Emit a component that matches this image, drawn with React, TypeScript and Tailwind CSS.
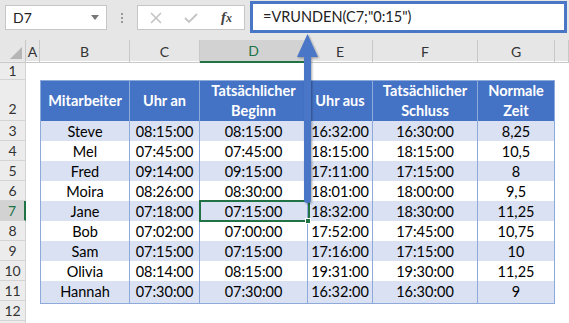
import React from "react";

const font = { fontFamily: "Lato, 'Open Sans', sans-serif" };

const rows = [
  ["Steve", "08:15:00", "08:15:00", "16:32:00", "16:30:00", "8,25"],
  ["Mel", "07:45:00", "07:45:00", "18:15:00", "18:15:00", "10,5"],
  ["Fred", "09:14:00", "09:15:00", "17:11:00", "17:15:00", "8"],
  ["Moira", "08:26:00", "08:30:00", "18:01:00", "18:00:00", "9,5"],
  ["Jane", "07:18:00", "07:15:00", "18:32:00", "18:30:00", "11,25"],
  ["Bob", "07:02:00", "07:00:00", "17:52:00", "17:45:00", "10,75"],
  ["Sam", "07:15:00", "07:15:00", "17:16:00", "17:15:00", "10"],
  ["Olivia", "08:14:00", "08:15:00", "19:31:00", "19:30:00", "11,25"],
  ["Hannah", "07:30:00", "07:30:00", "16:32:00", "16:30:00", "9"],
];

const grid = "grid grid-cols-[26px_14px_90px_70px_108px_65px_105px_77px_1fr]";

function RowHead({ n, h, sel, bottom }: { n: number | string; h: string; sel?: boolean; bottom?: boolean }) {
  return (
    <div
      className={`${h} flex ${bottom ? "items-end pb-[1px]" : "items-center"} justify-center border-b border-r border-[#d4d4d4] text-[14px] ${
        sel ? "bg-[#d2d2d2] text-[#217346] border-r-2 border-r-[#217346]" : "bg-[#ececec] text-[#333]"
      }`}
    >
      {n}
    </div>
  );
}

export default function App() {
  return (
    <div className="w-[569px] h-[323px] overflow-hidden bg-white relative text-black" style={font}>
      {/* Formula toolbar */}
      <div className="h-[40px] bg-[#e6e6e6] flex items-start pt-[5px] pl-[5px] relative">
        <div className="w-[102px] h-[25px] bg-white border border-[#c6c6c6] flex items-center justify-between pl-[7px] pr-[7px] text-[14px] text-[#222]">
          <span>D7</span>
          <span className="w-0 h-0 border-l-[4px] border-r-[4px] border-t-[5px] border-l-transparent border-r-transparent border-t-[#777]"></span>
        </div>
        <div className="w-[30px] h-[25px] flex flex-col items-center justify-center gap-[2px]">
          <span className="w-[2px] h-[2px] bg-[#999]"></span>
          <span className="w-[2px] h-[2px] bg-[#999]"></span>
          <span className="w-[2px] h-[2px] bg-[#999]"></span>
        </div>
        <div className="w-[108px] h-[25px] bg-white border border-[#c6c6c6] flex items-center pl-[12px] gap-[22px]">
          <svg width="12" height="12" viewBox="0 0 12 12">
            <path d="M1 1L11 11M11 1L1 11" stroke="#c4c4c4" strokeWidth="1.6" fill="none" />
          </svg>
          <svg width="14" height="12" viewBox="0 0 14 12">
            <path d="M1 6L5 10L13 2" stroke="#c4c4c4" strokeWidth="1.8" fill="none" />
          </svg>
          <span className="ml-[1px] text-[15px] italic font-bold text-[#444] leading-none" style={{ fontFamily: "'Liberation Serif', serif" }}>
            f<span className="text-[12px]">x</span>
          </span>
        </div>
        <div className="absolute left-[250px] top-[1px] w-[317px] h-[32px] border-[3px] border-[#4a76c6] bg-white flex items-center pl-[10px] text-[14.5px] text-[#222]">
          =VRUNDEN(C7;"0:15")
        </div>
      </div>

      {/* Column headers */}
      <div className={`${grid} h-[21px] bg-[#e6e6e6] text-[14px] text-[#333]`}>
        <div className="border-r border-b border-[#c8c8c8] relative">
          <svg className="absolute right-[3px] bottom-[3px]" width="12" height="12" viewBox="0 0 12 12">
            <path d="M12 0L12 12L0 12Z" fill="#b5b5b5" />
          </svg>
        </div>
        {["A", "B", "C"].map((c) => (
          <div key={c} className="flex items-center justify-center border-r border-b border-[#c8c8c8]">{c}</div>
        ))}
        <div className="flex items-center justify-center border-r border-[#c8c8c8] bg-[#d2d2d2] text-[#217346] border-b-2 border-b-[#217346]">D</div>
        {["E", "F", "G", ""].map((c, i) => (
          <div key={i} className="flex items-center justify-center border-r border-b border-[#c8c8c8]">{c}</div>
        ))}
      </div>

      {/* Row 1 */}
      <div className={`${grid} h-[19px]`}>
        <RowHead n={1} h="h-[19px]" />
      </div>

      {/* Row 2 header */}
      <div className={`${grid} h-[41px]`}>
        <RowHead n={2} h="h-[41px]" bottom />
        <div></div>
        {[
          ["Mitarbeiter"],
          ["Uhr an"],
          ["Tatsächlicher", "Beginn"],
          ["Uhr aus"],
          ["Tatsächlicher", "Schluss"],
          ["Normale", "Zeit"],
        ].map((lines, i) => (
          <div
            key={i}
            className={`bg-[#4472c4] text-white font-bold text-[14.5px] leading-[20px] flex flex-col items-center justify-center border-t border-r border-b border-[#8eaadb] ${
              i === 0 ? "border-l" : ""
            }`}
          >
            {lines.map((l) => (
              <span key={l}>{l}</span>
            ))}
          </div>
        ))}
        <div></div>
      </div>

      {rows.map((r, ri) => (
        <div key={ri} className={`${grid} h-[20px]`}>
          <RowHead n={ri + 3} h="h-[20px]" sel={ri === 4} />
          <div></div>
          {r.map((v, ci) => (
            <div
              key={ci}
              className={`${ri % 2 === 0 ? "bg-[#d9e1f2]" : "bg-white"} text-[14.5px] flex items-center justify-center border-r border-b border-[#8eaadb] ${
                ci === 0 ? "border-l" : ""
              }`}
            >
              {v}
            </div>
          ))}
          <div></div>
        </div>
      ))}

      <div className={`${grid} h-[20px]`}>
        <RowHead n={12} h="h-[20px]" />
      </div>
      <div className={`${grid} h-[20px]`}>
        <RowHead n="" h="h-[20px]" />
      </div>

      {/* Selected cell D7 */}
      <div className="absolute left-[199px] top-[200px] w-[111px] h-[22px] border-2 border-[#217346]"></div>
      <div className="absolute left-[305px] top-[218px] w-[6px] h-[6px] bg-[#217346] border border-white"></div>

      {/* Arrow */}
      <svg className="absolute left-[295px] top-[33px]" width="26" height="174" viewBox="0 0 26 174">
        <defs>
          <filter id="sh" x="-50%" y="-10%" width="200%" height="120%">
            <feDropShadow dx="1" dy="1" stdDeviation="1.2" floodColor="#000" floodOpacity="0.35" />
          </filter>
        </defs>
        <g filter="url(#sh)">
          <path d="M2 24L12.5 1L23 24Z" fill="#4a76c6" />
          <rect x="9" y="22" width="7" height="148" rx="3.5" fill="#4a76c6" />
        </g>
      </svg>
    </div>
  );
}
